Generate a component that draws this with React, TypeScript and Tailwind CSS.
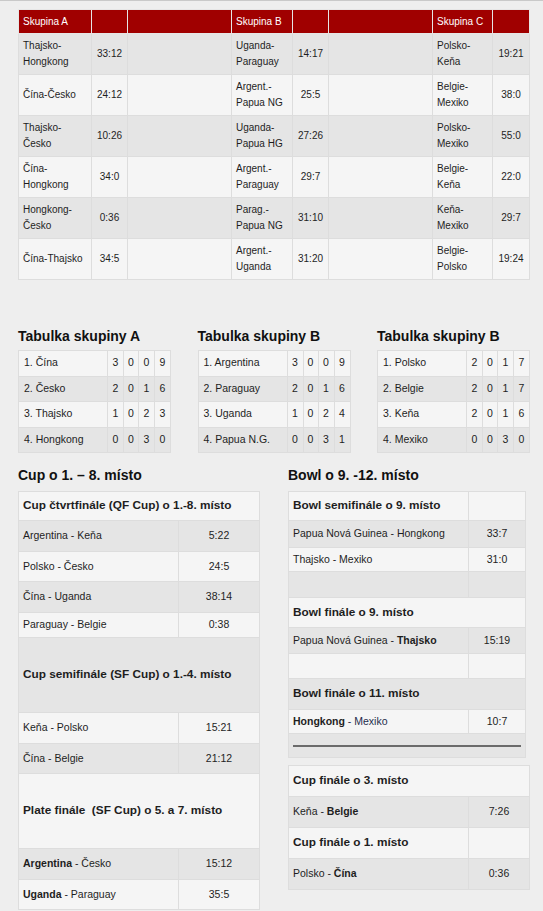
import React from 'react';

type Match = [string, string];

const groups: { name: string; matches: Match[] }[] = [
  {
    name: 'Skupina A',
    matches: [
      ['Thajsko-\nHongkong', '33:12'],
      ['Čína-Česko', '24:12'],
      ['Thajsko-\nČesko', '10:26'],
      ['Čína-\nHongkong', '34:0'],
      ['Hongkong-\nČesko', '0:36'],
      ['Čína-Thajsko', '34:5'],
    ],
  },
  {
    name: 'Skupina B',
    matches: [
      ['Uganda-\nParaguay', '14:17'],
      ['Argent.-\nPapua NG', '25:5'],
      ['Uganda-\nPapua HG', '27:26'],
      ['Argent.-\nParaguay', '29:7'],
      ['Parag.-\nPapua NG', '31:10'],
      ['Argent.-\nUganda', '31:20'],
    ],
  },
  {
    name: 'Skupina C',
    matches: [
      ['Polsko-\nKeňa', '19:21'],
      ['Belgie-\nMexiko', '38:0'],
      ['Polsko-\nMexiko', '55:0'],
      ['Belgie-\nKeňa', '22:0'],
      ['Keňa-\nMexiko', '29:7'],
      ['Belgie-\nPolsko', '19:24'],
    ],
  },
];

const standings: { title: string; rows: [string, number, number, number, number][] }[] = [
  {
    title: 'Tabulka skupiny A',
    rows: [
      ['1. Čína', 3, 0, 0, 9],
      ['2. Česko', 2, 0, 1, 6],
      ['3. Thajsko', 1, 0, 2, 3],
      ['4. Hongkong', 0, 0, 3, 0],
    ],
  },
  {
    title: 'Tabulka skupiny B',
    rows: [
      ['1. Argentina', 3, 0, 0, 9],
      ['2. Paraguay', 2, 0, 1, 6],
      ['3. Uganda', 1, 0, 2, 4],
      ['4. Papua N.G.', 0, 0, 3, 1],
    ],
  },
  {
    title: 'Tabulka skupiny B',
    rows: [
      ['1. Polsko', 2, 0, 1, 7],
      ['2. Belgie', 2, 0, 1, 7],
      ['3. Keňa', 2, 0, 1, 6],
      ['4. Mexiko', 0, 0, 3, 0],
    ],
  },
];

type Row =
  | { kind: 'title'; text: string; h: string; split?: boolean }
  | { kind: 'match'; teams: React.ReactNode; score: string; h: string }
  | { kind: 'empty'; h: string }
  | { kind: 'hr'; h: string };

const cupRows: Row[] = [
  { kind: 'title', text: 'Cup čtvrtfinále (QF Cup) o 1.-8. místo', h: 'h-[29px]' },
  { kind: 'match', teams: 'Argentina - Keňa', score: '5:22', h: 'h-[31px]' },
  { kind: 'match', teams: 'Polsko - Česko', score: '24:5', h: 'h-[30px]' },
  { kind: 'match', teams: 'Čína - Uganda', score: '38:14', h: 'h-[31px]' },
  { kind: 'match', teams: 'Paraguay - Belgie', score: '0:38', h: 'h-[25px]' },
  { kind: 'title', text: 'Cup semifinále (SF Cup) o 1.-4. místo', h: 'h-[75px]' },
  { kind: 'match', teams: 'Keňa - Polsko', score: '15:21', h: 'h-[31px]' },
  { kind: 'match', teams: 'Čína - Belgie', score: '21:12', h: 'h-[30px]' },
  { kind: 'title', text: 'Plate finále\u00a0 (SF Cup) o 5. a 7. místo', h: 'h-[75px]' },
  { kind: 'match', teams: <><b>Argentina</b> - Česko</>, score: '15:12', h: 'h-[31px]' },
  { kind: 'match', teams: <><b>Uganda</b> - Paraguay</>, score: '35:5', h: 'h-[30px]' },
];

const bowlRows: Row[] = [
  { kind: 'title', text: 'Bowl semifinále o 9. místo', h: 'h-[29px]', split: true },
  { kind: 'match', teams: 'Papua Nová Guinea - Hongkong', score: '33:7', h: 'h-[27px]' },
  { kind: 'match', teams: 'Thajsko - Mexiko', score: '31:0', h: 'h-[24px]' },
  { kind: 'empty', h: 'h-[26px]' },
  { kind: 'title', text: 'Bowl finále o 9. místo', h: 'h-[30px]' },
  { kind: 'match', teams: <>Papua Nová Guinea - <b>Thajsko</b></>, score: '15:19', h: 'h-[26px]' },
  { kind: 'empty', h: 'h-[25px]' },
  { kind: 'title', text: 'Bowl finále o 11. místo', h: 'h-[31px]' },
  { kind: 'match', teams: <><b>Hongkong</b> <span className="text-[#1f2d4d]">- Mexiko</span></>, score: '10:7', h: 'h-[24px]' },
  { kind: 'hr', h: 'h-[24px]' },
];

const finalRows: Row[] = [
  { kind: 'title', text: 'Cup finále o 3. místo', h: 'h-[31px]' },
  { kind: 'match', teams: <>Keňa - <b>Belgie</b></>, score: '7:26', h: 'h-[31px]' },
  { kind: 'title', text: 'Cup finále o 1. místo', h: 'h-[31px]', split: true },
  { kind: 'match', teams: <>Polsko - <b>Čína</b></>, score: '0:36', h: 'h-[31px]' },
];

const cell = 'border border-[#dddddd] px-[4px]';
const stripe = (i: number) => (i % 2 === 0 ? 'bg-[#f5f5f5]' : 'bg-[#e5e5e5]');

function ResultTable({ rows, width, cols }: { rows: Row[]; width: string; cols: [string, string] }) {
  return (
    <table className={`${width} table-fixed border border-[#dddddd] text-[10.5px]`}>
      <colgroup>
        <col className={cols[0]} />
        <col className={cols[1]} />
      </colgroup>
      <tbody>
        {rows.map((r, i) => {
          if (r.kind === 'title') {
            return (
              <tr key={i} className={`${r.h} ${stripe(i)}`}>
                {r.split ? (
                  <>
                    <td className={`${cell} text-[11.8px] font-bold`}>{r.text}</td>
                    <td className={cell}></td>
                  </>
                ) : (
                  <td colSpan={2} className={`${cell} text-[11.8px] font-bold`}>
                    {r.text}
                  </td>
                )}
              </tr>
            );
          }
          if (r.kind === 'match') {
            return (
              <tr key={i} className={`${r.h} ${stripe(i)}`}>
                <td className={cell}>{r.teams}</td>
                <td className={`${cell} text-center`}>{r.score}</td>
              </tr>
            );
          }
          if (r.kind === 'empty') {
            return (
              <tr key={i} className={`${r.h} ${stripe(i)}`}>
                <td className={cell}></td>
                <td className={cell}></td>
              </tr>
            );
          }
          return (
            <tr key={i} className={`${r.h} ${stripe(i)}`}>
              <td colSpan={2} className={cell}>
                <div className="border-t-2 border-[#6b6b6b]" />
              </td>
            </tr>
          );
        })}
      </tbody>
    </table>
  );
}

export default function App() {
  const widths = ['w-[73px]', 'w-[36px]', 'w-[104px]', 'w-[61px]', 'w-[36px]', 'w-[104px]', 'w-[60px]', 'w-[37px]'];

  return (
    <div className="min-h-screen bg-[#eeeeee] font-['Liberation_Sans',Arial,sans-serif] text-[#1e1e1e]">
      <div className="h-[9px] border-t border-[#c9c9c9]" />

      {/* Group matches */}
      <table className="ml-[18px] w-[511px] table-fixed border border-[#dddddd] text-[10px] leading-[16px]">
        <colgroup>
          {widths.map((w, i) => (
            <col key={i} className={w} />
          ))}
        </colgroup>
        <thead>
          <tr className="h-[24px] bg-[#a00000] text-white">
            {groups.map((g) => (
              <React.Fragment key={g.name}>
                <th className="border border-[#e6e6e6] px-[4px] text-left font-normal">{g.name}</th>
                <th className="border border-[#e6e6e6]"></th>
                {g.name !== 'Skupina C' && <th className="border border-[#e6e6e6]"></th>}
              </React.Fragment>
            ))}
          </tr>
        </thead>
        <tbody>
          {groups[0].matches.map((_, i) => (
            <tr key={i} className={`h-[41px] ${stripe(i + 1)}`}>
              {groups.map((g, gi) => {
                const [teams, score] = g.matches[i];
                return (
                  <React.Fragment key={gi}>
                    <td className={cell}>
                      {teams.split('\n').map((t, k) => (
                        <React.Fragment key={k}>
                          {k > 0 && <br />}
                          {t}
                        </React.Fragment>
                      ))}
                    </td>
                    <td className={`${cell} text-center`}>{score}</td>
                    {gi < 2 && <td className={cell}></td>}
                  </React.Fragment>
                );
              })}
            </tr>
          ))}
        </tbody>
      </table>

      {/* Standings */}
      <div className="ml-[18px] mt-[46px] flex w-[511px] justify-between">
        {standings.map((s, si) => (
          <div key={si} className="w-[152px]">
            <h3 className="mb-[4px] text-[14px] font-bold leading-[20px] text-[#111]">{s.title}</h3>
            <table className="w-full table-fixed border border-[#dddddd] text-[10.5px]">
              <colgroup>
                <col className="w-[89px]" />
                <col className="w-[16px]" />
                <col className="w-[15px]" />
                <col className="w-[16px]" />
                <col className="w-[16px]" />
              </colgroup>
              <tbody>
                {s.rows.map((r, i) => (
                  <tr key={i} className={`h-[25.5px] ${stripe(i)}`}>
                    <td className="border border-[#dddddd] pl-[5px]">{r[0]}</td>
                    {r.slice(1).map((n, k) => (
                      <td key={k} className="border border-[#dddddd] text-center">
                        {n}
                      </td>
                    ))}
                  </tr>
                ))}
              </tbody>
            </table>
          </div>
        ))}
      </div>

      {/* Knockout */}
      <div className="ml-[18px] mt-[12px] flex w-[511px] gap-[29px]">
        <div className="w-[241px]">
          <h3 className="mb-[6px] text-[14px] font-bold leading-[20px] text-[#111]">Cup o 1. – 8. místo</h3>
          <ResultTable rows={cupRows} width="w-[241px]" cols={['w-[160px]', 'w-[81px]']} />
        </div>
        <div className="w-[241px]">
          <h3 className="mb-[6px] text-[14px] font-bold leading-[20px] text-[#111]">Bowl o 9. -12. místo</h3>
          <ResultTable rows={bowlRows} width="w-[237px]" cols={['w-[180px]', 'w-[57px]']} />
          <div className="h-[7px]" />
          <ResultTable rows={finalRows} width="w-[241px]" cols={['w-[180px]', 'w-[61px]']} />
        </div>
      </div>
    </div>
  );
}
